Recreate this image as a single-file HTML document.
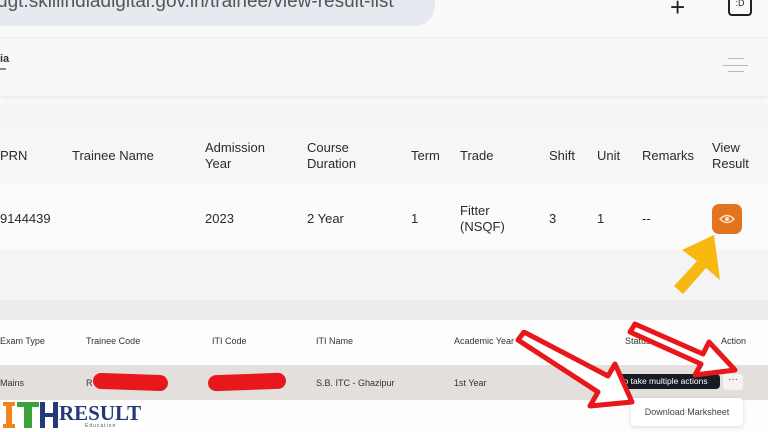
<!DOCTYPE html><html><head><style>
body{margin:0;width:768px;height:432px;overflow:hidden;position:relative;background:#fafafa;font-family:"Liberation Sans",sans-serif;color:#2a2a2a}
.a{position:absolute}
.t{position:absolute;font-size:13px;line-height:16px;color:#2b2b2b}
.s{position:absolute;font-size:9px;color:#333}
</style></head><body>
<div class="a" style="left:0;top:0;width:768px;height:37px;background:#fafafa"></div>
<div class="a" style="left:-30px;top:-20px;width:465px;height:46px;background:#e6e9ef;border-radius:0 0 20px 0"></div>
<div class="a" style="left:-3px;top:-9px;font-size:19px;color:#555">dgt.skillindiadigital.gov.in/trainee/view-result-list</div>
<div class="a" style="left:670px;top:-8px;font-size:26px;color:#222">+</div>
<div class="a" style="left:728px;top:-6px;width:20px;height:18px;border:2px solid #222;border-radius:4px;font-size:9px;text-align:center;line-height:14px">:D</div>
<div class="a" style="left:0;top:37px;width:768px;height:58px;background:#f8f8f8;border-top:1px solid #ececec;box-shadow:0 3px 5px rgba(0,0,0,.06)"></div>
<div class="a" style="left:0;top:53px;font-size:11px;font-weight:bold;color:#334">ia</div>
<div class="a" style="left:0;top:68px;width:6px;height:2px;background:#888"></div>
<div class="a" style="left:728px;top:58px;width:16px;height:1px;background:#bbb"></div>
<div class="a" style="left:722px;top:65px;width:26px;height:1px;background:#bbb"></div>
<div class="a" style="left:728px;top:71px;width:16px;height:1px;background:#bbb"></div>
<div class="a" style="left:0;top:103px;width:768px;height:197px;background:#f4f4f4"></div>
<div class="a" style="left:0;top:126px;width:768px;height:58px;background:#f6f6f6"></div>
<div class="a" style="left:0;top:184px;width:768px;height:66px;background:#fbfbfb"></div>
<div class="t" style="left:0;top:148px">PRN</div>
<div class="t" style="left:72px;top:148px">Trainee Name</div>
<div class="t" style="left:205px;top:140px">Admission<br>Year</div>
<div class="t" style="left:307px;top:140px">Course<br>Duration</div>
<div class="t" style="left:411px;top:148px">Term</div>
<div class="t" style="left:460px;top:148px">Trade</div>
<div class="t" style="left:549px;top:148px">Shift</div>
<div class="t" style="left:597px;top:148px">Unit</div>
<div class="t" style="left:642px;top:148px">Remarks</div>
<div class="t" style="left:712px;top:140px">View<br>Result</div>
<div class="t" style="left:0;top:211px">9144439</div>
<div class="t" style="left:205px;top:211px">2023</div>
<div class="t" style="left:307px;top:211px">2 Year</div>
<div class="t" style="left:411px;top:211px">1</div>
<div class="t" style="left:460px;top:203px">Fitter<br>(NSQF)</div>
<div class="t" style="left:549px;top:211px">3</div>
<div class="t" style="left:597px;top:211px">1</div>
<div class="t" style="left:642px;top:211px">--</div>
<div class="a" style="left:712px;top:204px;width:30px;height:30px;background:#e2731f;border-radius:7px"></div>
<svg class="a" style="left:719px;top:212px" width="16" height="14" viewBox="0 0 16 14"><path d="M1 7Q8 0 15 7Q8 14 1 7Z" fill="none" stroke="#fde4cc" stroke-width="1.5"/><circle cx="8" cy="7" r="2" fill="#fde4cc"/></svg>
<svg class="a" style="left:665px;top:230px" width="60" height="65" viewBox="0 0 60 65"><path d="M49 5L55 50L41 38L18 64L9 56L32 31L17 20Z" fill="#f7b812"/></svg>
<div class="a" style="left:0;top:300px;width:768px;height:20px;background:#ececec"></div>
<div class="a" style="left:0;top:320px;width:768px;height:45px;background:#fdfdfd"></div>
<div class="a" style="left:0;top:365px;width:768px;height:35px;background:#e3dfdc"></div>
<div class="a" style="left:0;top:400px;width:768px;height:32px;background:#fdfdfd"></div>
<div class="s" style="left:0;top:336px">Exam Type</div>
<div class="s" style="left:86px;top:336px">Trainee Code</div>
<div class="s" style="left:212px;top:336px">ITI Code</div>
<div class="s" style="left:316px;top:336px">ITI Name</div>
<div class="s" style="left:454px;top:336px">Academic Year</div>
<div class="s" style="left:625px;top:336px">Status</div>
<div class="s" style="left:721px;top:336px">Action</div>
<div class="s" style="left:0;top:378px">Mains</div>
<div class="s" style="left:86px;top:378px">R</div>
<div class="s" style="left:316px;top:378px">S.B. ITC - Ghazipur</div>
<div class="s" style="left:454px;top:378px">1st Year</div>
<div class="a" style="left:93px;top:374px;width:75px;height:16px;background:#e8171c;border-radius:9px;transform:rotate(2deg)"></div>
<div class="a" style="left:208px;top:374px;width:78px;height:16px;background:#e8171c;border-radius:9px;transform:rotate(-2deg)"></div>
<div class="a" style="left:588px;top:374px;width:132px;height:15px;background:#161b24;border-radius:4px;color:#fff;font-size:8.5px;line-height:15px;text-align:center">Click to take multiple actions</div>
<div class="a" style="left:723px;top:374px;width:20px;height:16px;background:#f4f2f2;border-radius:3px;font-size:10px;text-align:center;line-height:12px;color:#444">···</div>
<div class="a" style="left:631px;top:398px;width:112px;height:28px;background:#fff;box-shadow:0 1px 5px rgba(0,0,0,.15);border-radius:3px;font-size:9px;line-height:28px;text-align:center;color:#444">Download Marksheet</div>
<svg class="a" style="left:510px;top:330px" width="130" height="80" viewBox="0 0 130 80"><path d="M8 10L14 2L98 46L105 34L122 72L80 76L88 62Z" fill="#fff" stroke="#e8171c" stroke-width="5" stroke-linejoin="round"/></svg>
<svg class="a" style="left:625px;top:320px" width="120" height="60" viewBox="0 0 120 60"><path d="M5 12L10 4L78 34L84 22L110 50L70 55L76 44Z" fill="#fff" stroke="#e8171c" stroke-width="5" stroke-linejoin="round"/></svg>
<div class="a" style="left:0;top:400px;width:143px;height:32px;background:#fff"></div>
<div class="a" style="left:3px;top:402px;width:12px;height:4px;background:#f58220"></div>
<div class="a" style="left:6px;top:402px;width:6px;height:26px;background:#f58220"></div>
<div class="a" style="left:3px;top:424px;width:12px;height:4px;background:#f58220"></div>
<div class="a" style="left:17px;top:402px;width:22px;height:5px;background:#3aa335"></div>
<div class="a" style="left:24px;top:402px;width:8px;height:26px;background:#3aa335"></div>
<div class="a" style="left:40px;top:402px;width:18px;height:26px;border-left:5px solid #233a7a;border-right:5px solid #233a7a;box-sizing:border-box"></div>
<div class="a" style="left:40px;top:413px;width:18px;height:4px;background:#233a7a"></div>
<div class="a" style="left:59px;top:401px;font-family:'Liberation Serif',serif;font-weight:bold;font-size:21px;color:#233a7a">RESULT</div>
<div class="a" style="left:85px;top:423px;font-size:5px;color:#555;letter-spacing:1px">Education</div>
</body></html>
